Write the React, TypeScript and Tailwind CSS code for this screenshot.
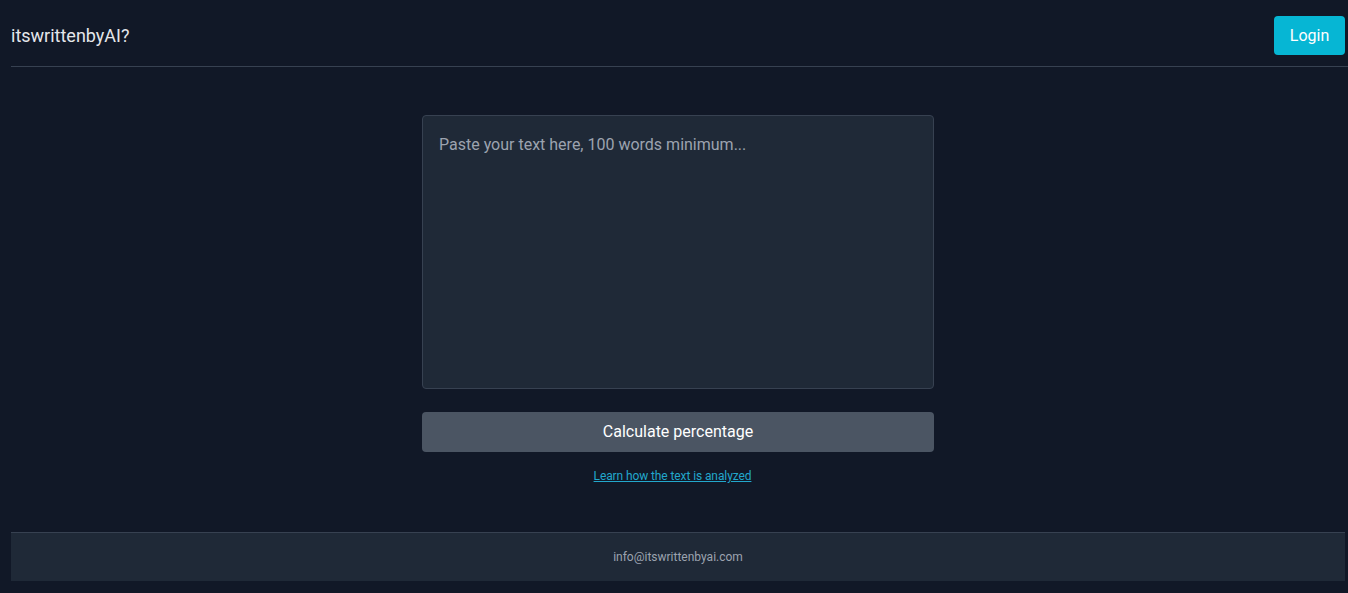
import React from "react";

export default function App() {
  return (
    <div className="min-h-[593px] bg-[#111827] pl-[11px] pr-[3px] font-['Roboto',sans-serif]">
      <header className="flex items-center justify-between border-b border-[#374151] -mr-[3px] pr-[3px] pt-[16px] pb-[11px]">
        <div className="text-[18px] text-[#e5e7eb]">itswrittenbyAI?</div>
        <button className="h-[39px] w-[71px] rounded-[4px] bg-[#06b6d4] text-[16px] text-white">
          Login
        </button>
      </header>
      <main className="flex flex-col items-center pt-[48px]">
        <textarea
          className="h-[274px] w-[512px] resize-none rounded-[4px] border border-[#374151] bg-[#1f2937] px-[16px] py-[19px] text-[16px] leading-[20px] text-[#e5e7eb] outline-none placeholder:text-[#9ca3af]"
          placeholder="Paste your text here, 100 words minimum..."
        />
        <button className="mt-[23px] h-[40px] w-[512px] rounded-[4px] bg-[#4b5563] text-[16px] font-normal text-white">
          Calculate percentage
        </button>
        <a href="#" className="mt-[15px] mr-[11px] text-[12px] tracking-[-0.1px] text-[#22a7cc] underline">
          Learn how the text is analyzed
        </a>
      </main>
      <footer className="mt-[47px] flex h-[49px] items-center justify-center border-t border-[#374151] bg-[#1f2937] text-[12px] text-[#9ca3af]">
        info@itswrittenbyai.com
      </footer>
    </div>
  );
}
